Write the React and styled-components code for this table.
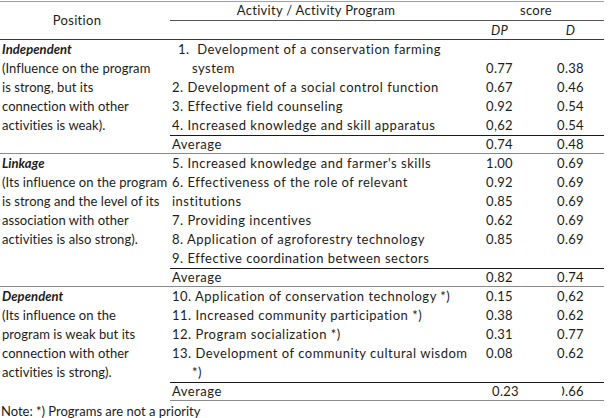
import React from 'react';
import styled, { createGlobalStyle } from 'styled-components';

const sections = [
  {
    title: 'Independent',
    desc: ['(Influence on the program', 'is strong, but its', 'connection with other', 'activities is weak).'],
    lines: [
      { text: '1.  Development of a conservation farming', lead: true },
      { text: 'system', indent: true, dp: '0.77', d: '0.38' },
      { text: '2. Development of a social control function', dp: '0.67', d: '0.46' },
      { text: '3. Effective field counseling', dp: '0.92', d: '0.54' },
      { text: '4. Increased knowledge and skill apparatus', dp: '0,62', d: '0.54' },
    ],
    avg: { dp: '0.74', d: '0.48' },
  },
  {
    title: 'Linkage',
    desc: [
      '(Its influence on the program',
      'is strong and the level of its',
      'association with other',
      'activities is also strong).',
    ],
    lines: [
      { text: "5. Increased knowledge and farmer's skills", dp: '1.00', d: '0.69' },
      { text: '6. Effectiveness of the role of relevant', dp: '0.92', d: '0.69' },
      { text: 'institutions', dp: '0.85', d: '0.69' },
      { text: '7. Providing incentives', dp: '0.62', d: '0.69' },
      { text: '8. Application of agroforestry technology', dp: '0.85', d: '0.69' },
      { text: '9. Effective coordination between sectors' },
    ],
    avg: { dp: '0.82', d: '0.74' },
  },
  {
    title: 'Dependent',
    desc: ['(Its influence on the', 'program is weak but its', 'connection with other', 'activities is strong).'],
    lines: [
      { text: '10. Application of conservation technology *)', dp: '0.15', d: '0,62' },
      { text: '11. Increased community participation *)', dp: '0.38', d: '0.62' },
      { text: '12. Program socialization *)', dp: '0.31', d: '0.77' },
      { text: '13. Development of community cultural wisdom', dp: '0.08', d: '0.62' },
      { text: '*)', indent: true },
    ],
    avg: { dp: '0.23', d: '0.66', cut: true },
    last: true,
  },
];

const GlobalStyle = createGlobalStyle`
  body {
    margin: 0;
    background: #fff;
    color: #1c1c1c;
    font-family: Lato, 'Liberation Sans', sans-serif;
  }
`;

const Page = styled.div`
  width: 609px;
  padding-top: 1px;
`;

const Table = styled.div`
  width: 604px;
  border-top: 1px solid #a0a0a0;
  font-size: 13px;
`;

const Head = styled.div`
  display: grid;
  grid-template-columns: 170px 292px 75px 67px;
  grid-template-rows: 19px 18px;
  border-bottom: 1px solid #3a3a3a;
  line-height: 17px;
  letter-spacing: 0.3px;
`;

const PositionHead = styled.div`
  grid-row: 1 / 3;
  display: flex;
  align-items: center;
  justify-content: center;
  padding-right: 16px;
`;

const TopHead = styled.div`
  grid-column: ${(p) => p.$col};
  text-align: center;
  border-bottom: 1px solid #555;
  padding-left: ${(p) => p.$shift || 0}px;
`;

const SubHead = styled.div`
  grid-column: ${(p) => p.$col};
  text-align: center;
  font-style: italic;
  line-height: 18px;
`;

const Section = styled.div`
  display: grid;
  grid-template-columns: 170px 1fr;
  border-bottom: 1px solid ${(p) => (p.$last ? 'transparent' : '#8a8a8a')};
`;

const PosCell = styled.div`
  padding-left: 2px;
  line-height: 19px;
  white-space: nowrap;
  letter-spacing: 0.05px;
`;

const PosTitle = styled.div`
  font-weight: 700;
  font-style: italic;
`;

const Lines = styled.div`
  display: flex;
  flex-direction: column;
`;

const Row = styled.div`
  display: grid;
  grid-template-columns: 292px 75px 67px;
  height: ${(p) => (p.$avg ? 17 : 19)}px;
  line-height: ${(p) => (p.$avg ? 17 : 19)}px;
  border-top: ${(p) => (p.$avg ? '1px solid #1a1a1a' : 'none')};
  border-bottom: ${(p) => (p.$closing ? '1px solid #8a8a8a' : 'none')};
  box-sizing: content-box;
`;

const Activity = styled.div`
  padding-left: ${(p) => (p.$indent ? 22 : p.$lead ? 8 : 2)}px;
  white-space: pre;
  letter-spacing: 0.5px;
`;

const Value = styled.div`
  text-align: center;
  padding-left: ${(p) => p.$shift || 0}px;
  letter-spacing: 0.3px;
`;

const Cut = styled.span`
  display: inline-block;
  clip-path: inset(0 0 0 5px);
`;

const Note = styled.div`
  font-size: 13px;
  line-height: 18px;
  padding-left: 1px;
`;

export default function App() {
  return (
    <Page>
      <GlobalStyle />
      <Table>
        <Head>
          <PositionHead>Position</PositionHead>
          <TopHead $col="2">Activity / Activity Program</TopHead>
          <TopHead $col="3 / 5" $shift={6}>score</TopHead>
          <SubHead $col="2" />
          <SubHead $col="3">DP</SubHead>
          <SubHead $col="4">D</SubHead>
        </Head>
        {sections.map((s) => (
          <Section key={s.title} $last={s.last}>
            <PosCell>
              <PosTitle>{s.title}</PosTitle>
              {s.desc.map((l) => (
                <div key={l}>{l}</div>
              ))}
            </PosCell>
            <Lines>
              {s.lines.map((l) => (
                <Row key={l.text}>
                  <Activity $indent={l.indent} $lead={l.lead}>{l.text}</Activity>
                  <Value>{l.dp}</Value>
                  <Value>{l.d}</Value>
                </Row>
              ))}
              <Row $avg $closing={s.last}>
                <Activity>Average</Activity>
                <Value $shift={s.avg.cut ? 12 : 0}>{s.avg.dp}</Value>
                <Value>{s.avg.cut ? <Cut>{s.avg.d}</Cut> : s.avg.d}</Value>
              </Row>
            </Lines>
          </Section>
        ))}
      </Table>
      <Note>Note: *) Programs are not a priority</Note>
    </Page>
  );
}
